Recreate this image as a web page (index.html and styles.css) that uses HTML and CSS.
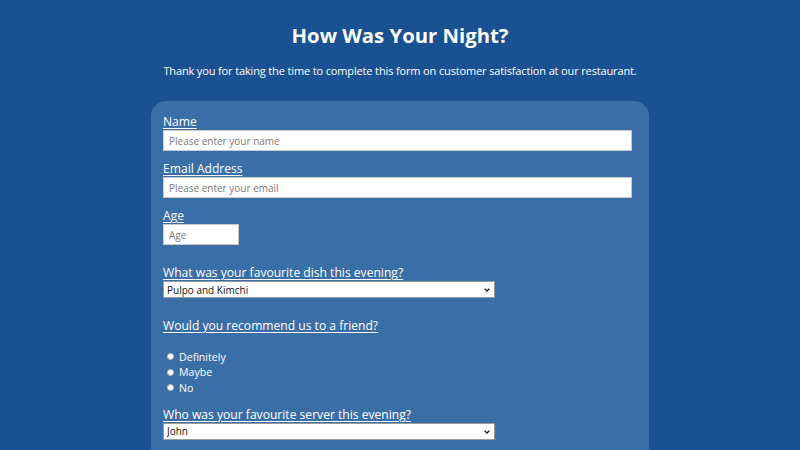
FILE: index.html
```html
<!DOCTYPE html>
<html lang="en">
<head>
<meta charset="utf-8">
<title>How Was Your Night?</title>
<link rel="stylesheet" href="styles.css">
</head>
<body>
<h1 class="title">How Was Your Night?</h1>
<p class="intro">Thank you for taking the time to complete this form on customer satisfaction at our restaurant.</p>
<form class="card">
  <label class="label" for="name">Name</label>
  <input class="field field-wide" id="name" type="text" placeholder="Please enter your name">
  <label class="label" for="email">Email Address</label>
  <input class="field field-wide" id="email" type="email" placeholder="Please enter your email">
  <label class="label" for="age">Age</label>
  <input class="field field-age" id="age" type="number" placeholder="Age">
  <label class="label label-gap" for="dish">What was your favourite dish this evening?</label>
  <div class="select-wrap">
    <select class="dropdown" id="dish">
      <option>Pulpo and Kimchi</option>
    </select>
    <svg class="chev" width="6" height="4" viewBox="0 0 6 4"><path d="M0.6 0.6 L3 3 L5.4 0.6" fill="none" stroke="#111" stroke-width="1.3"/></svg>
  </div>
  <p class="label label-gap">Would you recommend us to a friend?</p>
  <div class="radios">
    <label class="radio"><input type="radio" name="rec" class="dot">Definitely</label>
    <label class="radio"><input type="radio" name="rec" class="dot">Maybe</label>
    <label class="radio"><input type="radio" name="rec" class="dot">No</label>
  </div>
  <label class="label label-server" for="server">Who was your favourite server this evening?</label>
  <div class="select-wrap">
    <select class="dropdown" id="server">
      <option>John</option>
    </select>
    <svg class="chev" width="6" height="4" viewBox="0 0 6 4"><path d="M0.6 0.6 L3 3 L5.4 0.6" fill="none" stroke="#111" stroke-width="1.3"/></svg>
  </div>
</form>
</body>
</html>
```
FILE: styles.css
```css
html, body {
  margin: 0;
  padding: 0;
}
body {
  background: #1a5192;
  color: #ffffff;
  font-family: "Open Sans", "Liberation Sans", sans-serif;
  height: 450px;
  overflow: hidden;
}
.title {
  margin: 20px 0 0;
  font-size: 20.3px;
  line-height: 30px;
  font-weight: 700;
  text-align: center;
}
.intro {
  margin: 13px 0 0;
  font-size: 11px;
  line-height: 16px;
  letter-spacing: -0.14px;
  text-align: center;
}
.card {
  width: 469px;
  margin: 22px auto 0;
  padding: 12px 17px 40px 12px;
  background: #3a6ea6;
  border-radius: 15px;
  display: flex;
  flex-direction: column;
  align-items: flex-start;
}
.label {
  display: block;
  margin: 0;
  font-size: 12.1px;
  line-height: 17px;
  text-decoration: underline;
  text-underline-offset: 2px;
  text-decoration-thickness: 1px;
}
.label-gap {
  margin-top: 19px;
}
.label-server {
  margin-top: 10px;
}
.field {
  box-sizing: border-box;
  height: 21px;
  margin: 0 0 9px;
  padding: 0 5px;
  border: 1px solid #c9c9c9;
  border-radius: 0;
  background: #ffffff;
  font-family: inherit;
  font-size: 10px;
  color: #333;
}
.field::placeholder {
  color: #7a7a7a;
}
.field-wide {
  width: 469px;
}
.field-age {
  width: 76px;
  margin-bottom: 0;
  -moz-appearance: textfield;
}
.field-age::-webkit-outer-spin-button,
.field-age::-webkit-inner-spin-button {
  -webkit-appearance: none;
  margin: 0;
}
.select-wrap {
  position: relative;
  width: 332px;
  height: 17px;
}
.dropdown {
  -webkit-appearance: none;
  appearance: none;
  display: block;
  box-sizing: border-box;
  width: 332px;
  height: 17px;
  margin: 0;
  padding: 0 0 0 3px;
  border: 1px solid #9a9a9a;
  border-radius: 0;
  background: #ffffff;
  color: #111;
  font-family: inherit;
  font-size: 10px;
}
.chev {
  position: absolute;
  right: 5px;
  top: 7px;
  pointer-events: none;
}
.radios {
  margin-top: 15px;
  display: flex;
  flex-direction: column;
}
.radio {
  display: flex;
  align-items: center;
  height: 15.5px;
  font-size: 10.6px;
}
.dot {
  -webkit-appearance: none;
  appearance: none;
  width: 7px;
  height: 7px;
  margin: 0 5px 0 4px;
  border: 0.5px solid #bbb;
  border-radius: 50%;
  background: #ffffff;
}
```
